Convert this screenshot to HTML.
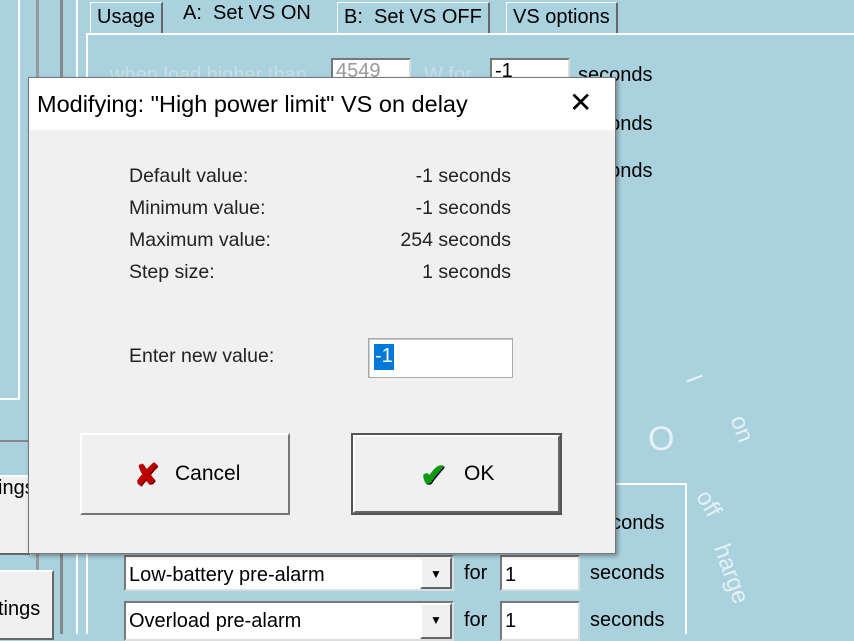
<!DOCTYPE html>
<html><head><style>
*{margin:0;padding:0;box-sizing:border-box}
body{width:854px;height:634px;overflow:hidden;background:#a9d1de;font-family:"Liberation Sans",sans-serif;position:relative;font-size:20px;color:#000}
.a{position:absolute}
.tab{position:absolute;top:2px;height:32px;background:#a9d1de;border:1px solid #fff;border-right:2px solid #666;border-bottom:none;padding:3px 6px;font-size:20px}
.inp{position:absolute;background:#fff;border:2px solid #777;border-right-color:#ddd;border-bottom-color:#ddd;font-size:20px;padding:0 3px}
.btn{position:absolute;background:#f0f0f0;border:2px solid #fff;border-right-color:#666;border-bottom-color:#666;font-size:20px}
.lbl{position:absolute;left:129px;font-size:19.5px;color:#222}
.val{position:absolute;font-size:19.5px;color:#222;text-align:right}
.w{color:#e6f1f5;font-size:24px}
</style></head><body>
<div class="a" style="left:0;top:0;width:20px;height:400px;border:2px solid #fff;border-left:none;border-top:none"></div>
<div class="a" style="left:36px;top:0;width:3px;height:634px;background:#999"></div>
<div class="a" style="left:60px;top:0;width:3px;height:634px;background:#888"></div>
<div class="a" style="left:76px;top:0;width:2px;height:634px;background:#fff"></div>
<div class="a" style="left:0;top:440px;width:80px;height:2px;background:#888"></div>
<div class="btn" style="left:-4px;top:475px;width:34px;height:80px">ings</div>
<div class="btn" style="left:-4px;top:570px;width:58px;height:70px;padding-top:26px">tings</div>
<div class="tab" style="left:90px;top:2px">Usage</div>
<div class="a" style="left:177px;top:0;height:34px;padding:2px 6px;font-size:20px">A:&nbsp; Set VS ON</div>
<div class="tab" style="left:337px">B:&nbsp; Set VS OFF</div>
<div class="tab" style="left:506px">VS options</div>
<div class="a" style="left:86px;top:33px;width:768px;height:2px;background:#fff"></div>
<div class="a" style="left:86px;top:33px;width:2px;height:601px;background:#fff"></div>
<div class="a" style="left:110px;top:64px;color:#c8dfe6">when load higher than</div>
<div class="inp" style="left:331px;top:58px;width:80px;height:26px;color:#999">4549</div>
<div class="a" style="left:424px;top:64px;color:#c8dfe6">W for</div>
<div class="inp" style="left:490px;top:58px;width:80px;height:26px">-1</div>
<div class="a" style="left:578px;top:64px">seconds</div>
<div class="a" style="left:578px;top:113px">seconds</div>
<div class="a" style="left:578px;top:160px">seconds</div>
<div class="a w" style="left:690px;top:365px;transform:rotate(70deg)">I</div>
<div class="a w" style="left:648px;top:420px;font-size:34px">O</div>
<div class="a w" style="left:728px;top:415px;transform:rotate(70deg)">on</div>
<div class="a w" style="left:695px;top:490px;transform:rotate(60deg)">off</div>
<div class="a w" style="left:700px;top:560px;transform:rotate(70deg)">harge</div>
<div class="a" style="left:685px;top:485px;width:2px;height:149px;background:#fff"></div>
<div class="a" style="left:110px;top:483px;width:577px;height:2px;background:#fff"></div>
<div class="a" style="left:590px;top:512px">seconds</div>
<div class="inp" style="left:124px;top:555px;width:330px;height:36px;padding-top:7px">Low-battery pre-alarm</div>
<div class="btn" style="left:420px;top:557px;width:32px;height:32px;text-align:center;font-size:12px;padding-top:8px">▼</div>
<div class="a" style="left:464px;top:562px">for</div>
<div class="inp" style="left:500px;top:555px;width:80px;height:36px;padding-top:7px">1</div>
<div class="a" style="left:590px;top:562px">seconds</div>
<div class="inp" style="left:124px;top:601px;width:330px;height:40px;padding-top:7px">Overload pre-alarm</div>
<div class="btn" style="left:420px;top:603px;width:32px;height:36px;text-align:center;font-size:12px;padding-top:8px">▼</div>
<div class="a" style="left:464px;top:609px">for</div>
<div class="inp" style="left:500px;top:601px;width:80px;height:40px;padding-top:7px">1</div>
<div class="a" style="left:590px;top:609px">seconds</div>

<div class="a" style="left:28px;top:77px;width:588px;height:477px;background:#f0f0f0;border:1px solid #777;box-shadow:2px 2px 4px rgba(0,0,0,.35)">
 <div class="a" style="left:0;top:0;width:586px;height:52px;background:#fff"></div>
 <div class="a" style="left:8px;top:13px;font-size:23.5px;color:#000">Modifying: "High power limit" VS on delay</div>
 <div class="a" style="left:540px;top:8px;font-size:28px;font-weight:300">✕</div>
</div>
<div class="lbl" style="top:165px">Default value:</div><div class="val" style="top:165px;right:343px">-1 seconds</div>
<div class="lbl" style="top:197px">Minimum value:</div><div class="val" style="top:197px;right:343px">-1 seconds</div>
<div class="lbl" style="top:229px">Maximum value:</div><div class="val" style="top:229px;right:343px">254 seconds</div>
<div class="lbl" style="top:261px">Step size:</div><div class="val" style="top:261px;right:343px">1 seconds</div>
<div class="lbl" style="top:345px">Enter new value:</div>
<div class="a" style="left:368px;top:338px;width:145px;height:40px;background:#fff;border:1px solid #aaa;box-shadow:inset 1px 1px 0 #ccc"></div>
<div class="a" style="left:374px;top:344px;height:26px;background:#0078d7;color:#fff;font-size:20px;padding:1px 1px">-1</div>
<div class="btn" style="left:80px;top:433px;width:210px;height:82px;border-color:#fff #777 #777 #fff"></div>
<div class="a" style="left:134px;top:458px;color:#b00;font-size:30px;font-weight:bold;text-shadow:1px 1px 0 #600">✘</div>
<div class="a" style="left:175px;top:462px;font-size:21px">Cancel</div>
<div class="a" style="left:351px;top:433px;width:211px;height:82px;border:2px solid #555"></div>
<div class="btn" style="left:353px;top:435px;width:207px;height:78px"></div>
<div class="a" style="left:420px;top:456px;color:#119911;font-size:32px;font-weight:bold;text-shadow:1px 1px 0 #003">✔</div>
<div class="a" style="left:464px;top:462px;font-size:21px">OK</div>
</body></html>
